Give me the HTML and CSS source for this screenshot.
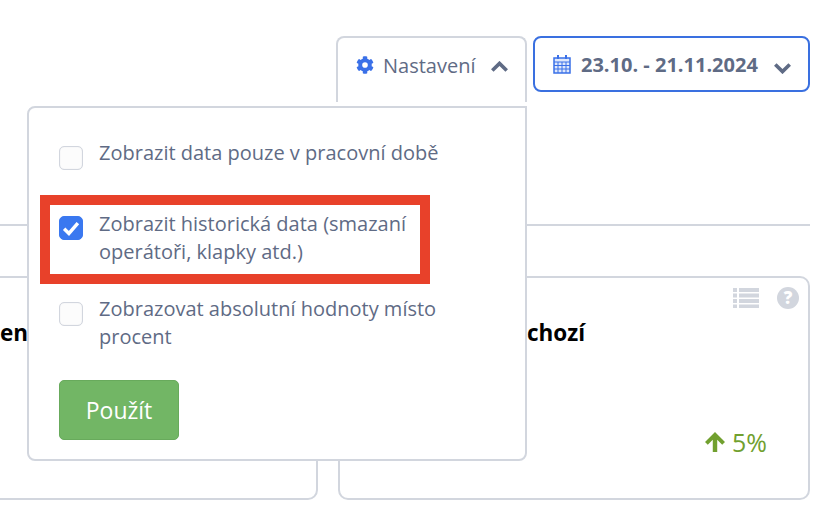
FILE: index.html
```html
<!DOCTYPE html>
<html lang="cs">
<head>
  <meta charset="UTF-8">
  <title>Nastavení</title>
  <link rel="stylesheet" href="styles.css">
</head>
<body>

<div class="page">
  <header class="toolbar">
    <button class="tab">
      <svg class="ico-gear" viewBox="0 0 512 512"><path d="M487 316l-42-25a190 190 0 0 0 0-70l42-25c5-3 7-9 5-14-11-35-30-67-54-93-4-4-10-5-15-2l-42 25a187 187 0 0 0-61-35V28c0-6-4-11-9-12-37-8-74-8-109 0-5 1-9 6-9 12v49a193 193 0 0 0-61 35L90 87c-5-3-11-2-15 2-24 26-43 58-54 93-2 5 0 11 5 14l42 25a190 190 0 0 0 0 70l-42 25c-5 3-7 9-5 14 11 35 30 67 54 93 4 4 10 5 15 2l42-25a187 187 0 0 0 61 35v49c0 6 4 11 9 12 37 8 74 8 109 0 5-1 9-6 9-12v-49a193 193 0 0 0 61-35l42 25c5 3 11 2 15-2 24-26 43-58 54-93 2-5 0-11-5-14zM256 336a80 80 0 1 1 0-160 80 80 0 0 1 0 160z"/></svg>
      <span>Nastavení</span>
      <svg class="ico-chevron ico-chevron-up" viewBox="1 0 14 10"><path d="M2 8l6-6 6 6"/></svg>
    </button>
    <button class="range">
      <svg class="ico-cal" viewBox="0 0 18 20"><path class="cal-body" d="M1 4h16v15H1z"/><path class="cal-grid" d="M1 8h16M1 11.500h16M1 15h16M5 8v11M9 8v11M13 8v11"/><path class="cal-ring" d="M5 1v4M13 1v4"/></svg>
      <span>23.10. - 21.11.2024</span>
      <svg class="ico-chevron" viewBox="1 0 14 10"><path d="M2 2l6 6 6-6"/></svg>
    </button>
  </header>

  <hr class="divider">

  <section class="cards">
    <div class="card">
      <h3 class="card-title">en</h3>
    </div>
    <div class="card">
      <div class="card-icons">
        <svg class="ico-list" viewBox="0 0 26 20"><path d="M0 0h4v4H0zM6 0h20v4H6zM0 5.500h4v4H0zM6 5.500h20v4H6zM0 11h4v4H0zM6 11h20v4H6zM0 16.500h4V20H0zM6 16.500h20V20H6z"/></svg>
        <span class="ico-help">?</span>
      </div>
      <h3 class="card-title">chozí</h3>
      <div class="trend">
        <svg class="ico-up" viewBox="1 1 18 18"><path d="M10 1l9 9-2.500 2.500L12 8v11H8V8l-4.500 4.500L1 10z"/></svg>
        <span>5%</span>
      </div>
    </div>
  </section>

  <div class="dropdown">
    <label class="option option-first">
      <span class="check"></span>
      <span>Zobrazit data pouze v pracovní době</span>
    </label>
    <label class="option">
      <span class="check checked">
        <svg viewBox="0 0 16 16"><path d="M3 8.500l3.500 3.500L13 4.500"/></svg>
      </span>
      <span>Zobrazit historická data (smazaní operátoři, klapky atd.)</span>
    </label>
    <label class="option">
      <span class="check"></span>
      <span>Zobrazovat absolutní hodnoty místo procent</span>
    </label>
    <button class="apply">Použít</button>
  </div>

  <div class="highlight"></div>
</div>

</body>
</html>
```

FILE: styles.css
```css
body {
  font-family: "Open Sans", sans-serif;
  background: #fff;
  color: #5f6b85;
  margin: 0;
  padding: 0;
}

.page {
  position: relative;
  width: 838px;
  height: 526px;
  overflow: hidden;
}

button {
  font-family: inherit;
  cursor: pointer;
}

.toolbar {
  display: flex;
  justify-content: flex-end;
  align-items: flex-start;
  gap: 6px;
  padding: 36px 28px 0 0;
  height: 224px;
  box-sizing: border-box;
}

.tab {
  display: flex;
  align-items: center;
  box-sizing: border-box;
  width: 191px;
  height: 66px;
  padding: 0 0 10px 18px;
  background: #fff;
  border: 2px solid #d2d6de;
  border-bottom: none;
  border-radius: 8px 8px 0 0;
  color: #5f6b85;
  font-size: 20px;
}

.range {
  display: flex;
  align-items: center;
  box-sizing: border-box;
  width: 277px;
  height: 56px;
  padding: 0 0 0 18px;
  background: #fff;
  border: 2px solid #3a70e0;
  border-radius: 8px;
  color: #5f6b85;
  font-size: 20px;
  font-weight: 700;
}

.ico-gear {
  flex: none;
  width: 18px;
  height: 18px;
  margin-right: 9px;
  fill: #3a70e8;
}

.ico-cal {
  flex: none;
  width: 18px;
  height: 20px;
  margin-right: 10px;
}

.cal-body {
  fill: #dfe8fb;
  stroke: #3a70e8;
  stroke-width: 1.500;
}

.cal-grid {
  fill: none;
  stroke: #3a70e8;
  stroke-width: 1;
}

.cal-ring {
  fill: none;
  stroke: #3a70e8;
  stroke-width: 2;
}

.ico-chevron {
  flex: none;
  width: 17px;
  height: 12px;
  margin: 8px 0 0 16px;
  fill: none;
  stroke: #5f6b85;
  stroke-width: 3;
}

.ico-chevron-up {
  margin-top: 4px;
}

.divider {
  border: none;
  border-top: 2px solid #d2d6de;
  margin: 0 28px 0 0;
}

.cards {
  display: flex;
  gap: 20px;
  margin: 50px 28px 0 -40px;
}

.card {
  position: relative;
  box-sizing: border-box;
  height: 224px;
  background: #fff;
  border: 2px solid #d2d6de;
  border-radius: 10px;
}

.card:first-child {
  width: 358px;
  flex: none;
}

.card:last-child {
  flex: 1;
}

.card-title {
  margin: 42px 0 0 187px;
  color: #000;
  font-size: 22.500px;
  font-weight: 700;
  line-height: 26px;
}

.card:first-child .card-title {
  margin-left: 38px;
}

.card-icons {
  position: absolute;
  top: 9px;
  right: 9px;
  display: flex;
  align-items: center;
  gap: 18px;
}

.ico-list {
  width: 26px;
  height: 20px;
  fill: #d2d6de;
}

.ico-help {
  width: 22px;
  height: 22px;
  border-radius: 50%;
  background: #d2d6de;
  color: #fff;
  font-size: 17px;
  font-weight: 800;
  line-height: 22px;
  text-align: center;
}

.trend {
  position: absolute;
  right: 41px;
  bottom: 41px;
  display: flex;
  align-items: center;
  gap: 7px;
  color: #71a02f;
  font-size: 25px;
  line-height: 30px;
}

.ico-up {
  width: 20px;
  height: 20px;
  fill: #71a02f;
}

.dropdown {
  position: absolute;
  top: 106px;
  left: 27px;
  box-sizing: border-box;
  width: 500px;
  height: 355px;
  padding: 31px 30px 0;
  background: #fff;
  border: 2px solid #d2d6de;
  border-radius: 8px 0 8px 8px;
}

.option {
  display: flex;
  align-items: flex-start;
  gap: 16px;
  margin-bottom: 29px;
  font-size: 20px;
  line-height: 28px;
}

.option-first {
  margin-bottom: 40px;
}

.check {
  flex: none;
  box-sizing: border-box;
  width: 24px;
  height: 24px;
  margin-top: 7px;
  background: #fcfcfc;
  border: 1px solid #d2d6de;
  border-radius: 5px;
  box-shadow: inset 0 0 1px #d2d6de;
}

.checked {
  margin-top: 6px;
  background: #3a78f0;
  border-color: #3a78f0;
  box-shadow: none;
}

.checked svg {
  display: block;
  width: 22px;
  height: 22px;
  fill: none;
  stroke: #fff;
  stroke-width: 2.500;
}

.apply {
  display: block;
  width: 120px;
  height: 60px;
  background: #72b665;
  border: 1px solid #68aa5c;
  border-radius: 5px;
  color: #fff;
  font-size: 23px;
}

.highlight {
  position: absolute;
  top: 195px;
  left: 40px;
  box-sizing: border-box;
  width: 390px;
  height: 89px;
  border: 10px solid #e8412a;
}
```
